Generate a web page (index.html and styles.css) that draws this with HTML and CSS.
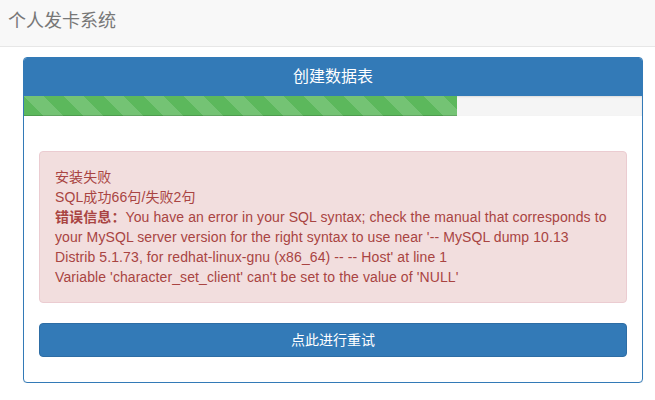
FILE: index.html
```html
<!DOCTYPE html>
<html lang="zh-CN">
<head>
<meta charset="utf-8">
<title>个人发卡系统</title>
<link rel="stylesheet" href="styles.css">
</head>
<body>
<nav class="navbar">
  <span class="brand">个人发卡系统</span>
</nav>
<main class="wrap">
  <section class="panel">
    <div class="panel-heading">创建数据表</div>
    <div class="progress"><div class="progress-bar" style="width:70%"></div></div>
    <div class="panel-body">
      <div class="alert">
        安装失败<br>
        SQL成功66句/失败2句<br>
        <strong>错误信息：</strong>You have an error in your SQL syntax; check the manual that corresponds to your MySQL server version for the right syntax to use near '-- MySQL dump 10.13  Distrib 5.1.73, for redhat-linux-gnu (x86_64) -- -- Host' at line 1<br>
        Variable 'character_set_client' can't be set to the value of 'NULL'
      </div>
      <div class="actions">
        <button class="btn" type="button">点此进行重试</button>
      </div>
    </div>
  </section>
</main>
</body>
</html>
```
FILE: styles.css
```css
* { box-sizing: border-box; }
html, body { margin: 0; padding: 0; }
body {
  background: #fff;
  color: #333;
  font-family: "Liberation Sans", Arial, "Noto Sans CJK SC", sans-serif;
  font-size: 14px;
  line-height: 20px;
}
.navbar {
  height: 47px;
  background: #f8f8f8;
  border-bottom: 1px solid #e7e7e7;
  display: flex;
  align-items: center;
  padding: 0 8px 4px;
}
.brand {
  font-size: 18px;
  line-height: 20px;
  color: #777;
}
.wrap {
  padding: 10px 12px 0 23px;
}
.panel {
  border: 1px solid #337ab7;
  border-radius: 4px;
  background: #fff;
  box-shadow: 0 1px 1px rgba(0,0,0,.05);
  overflow: hidden;
}
.panel-heading {
  background: #337ab7;
  color: #fff;
  text-align: center;
  font-size: 16px;
  line-height: 17px;
  padding: 10px 15px;
  border-bottom: 1px solid #337ab7;
}
.progress {
  height: 20px;
  background: #f5f5f5;
  box-shadow: inset 0 1px 2px rgba(0,0,0,.1);
  overflow: hidden;
}
.progress-bar {
  height: 100%;
  background-color: #5cb85c;
  background-image: linear-gradient(45deg, rgba(255,255,255,.15) 25%, transparent 25%, transparent 50%, rgba(255,255,255,.15) 50%, rgba(255,255,255,.15) 75%, transparent 75%, transparent);
  background-size: 40px 40px;
  box-shadow: inset 0 -1px 0 rgba(0,0,0,.15);
}
.panel-body {
  padding: 35px 15px 15px;
}
.alert {
  background: #f2dede;
  border: 1px solid #ebccd1;
  border-radius: 4px;
  color: #a94442;
  padding: 15px;
  margin-bottom: 20px;
  letter-spacing: 0.1px;
}
.alert strong { font-weight: bold; }
.actions { margin-bottom: 10px; }
.btn {
  display: block;
  width: 100%;
  background: #337ab7;
  border: 1px solid #2e6da4;
  border-radius: 4px;
  color: #fff;
  font-family: inherit;
  font-size: 14px;
  line-height: 20px;
  padding: 6px 12px;
  cursor: pointer;
}
```
